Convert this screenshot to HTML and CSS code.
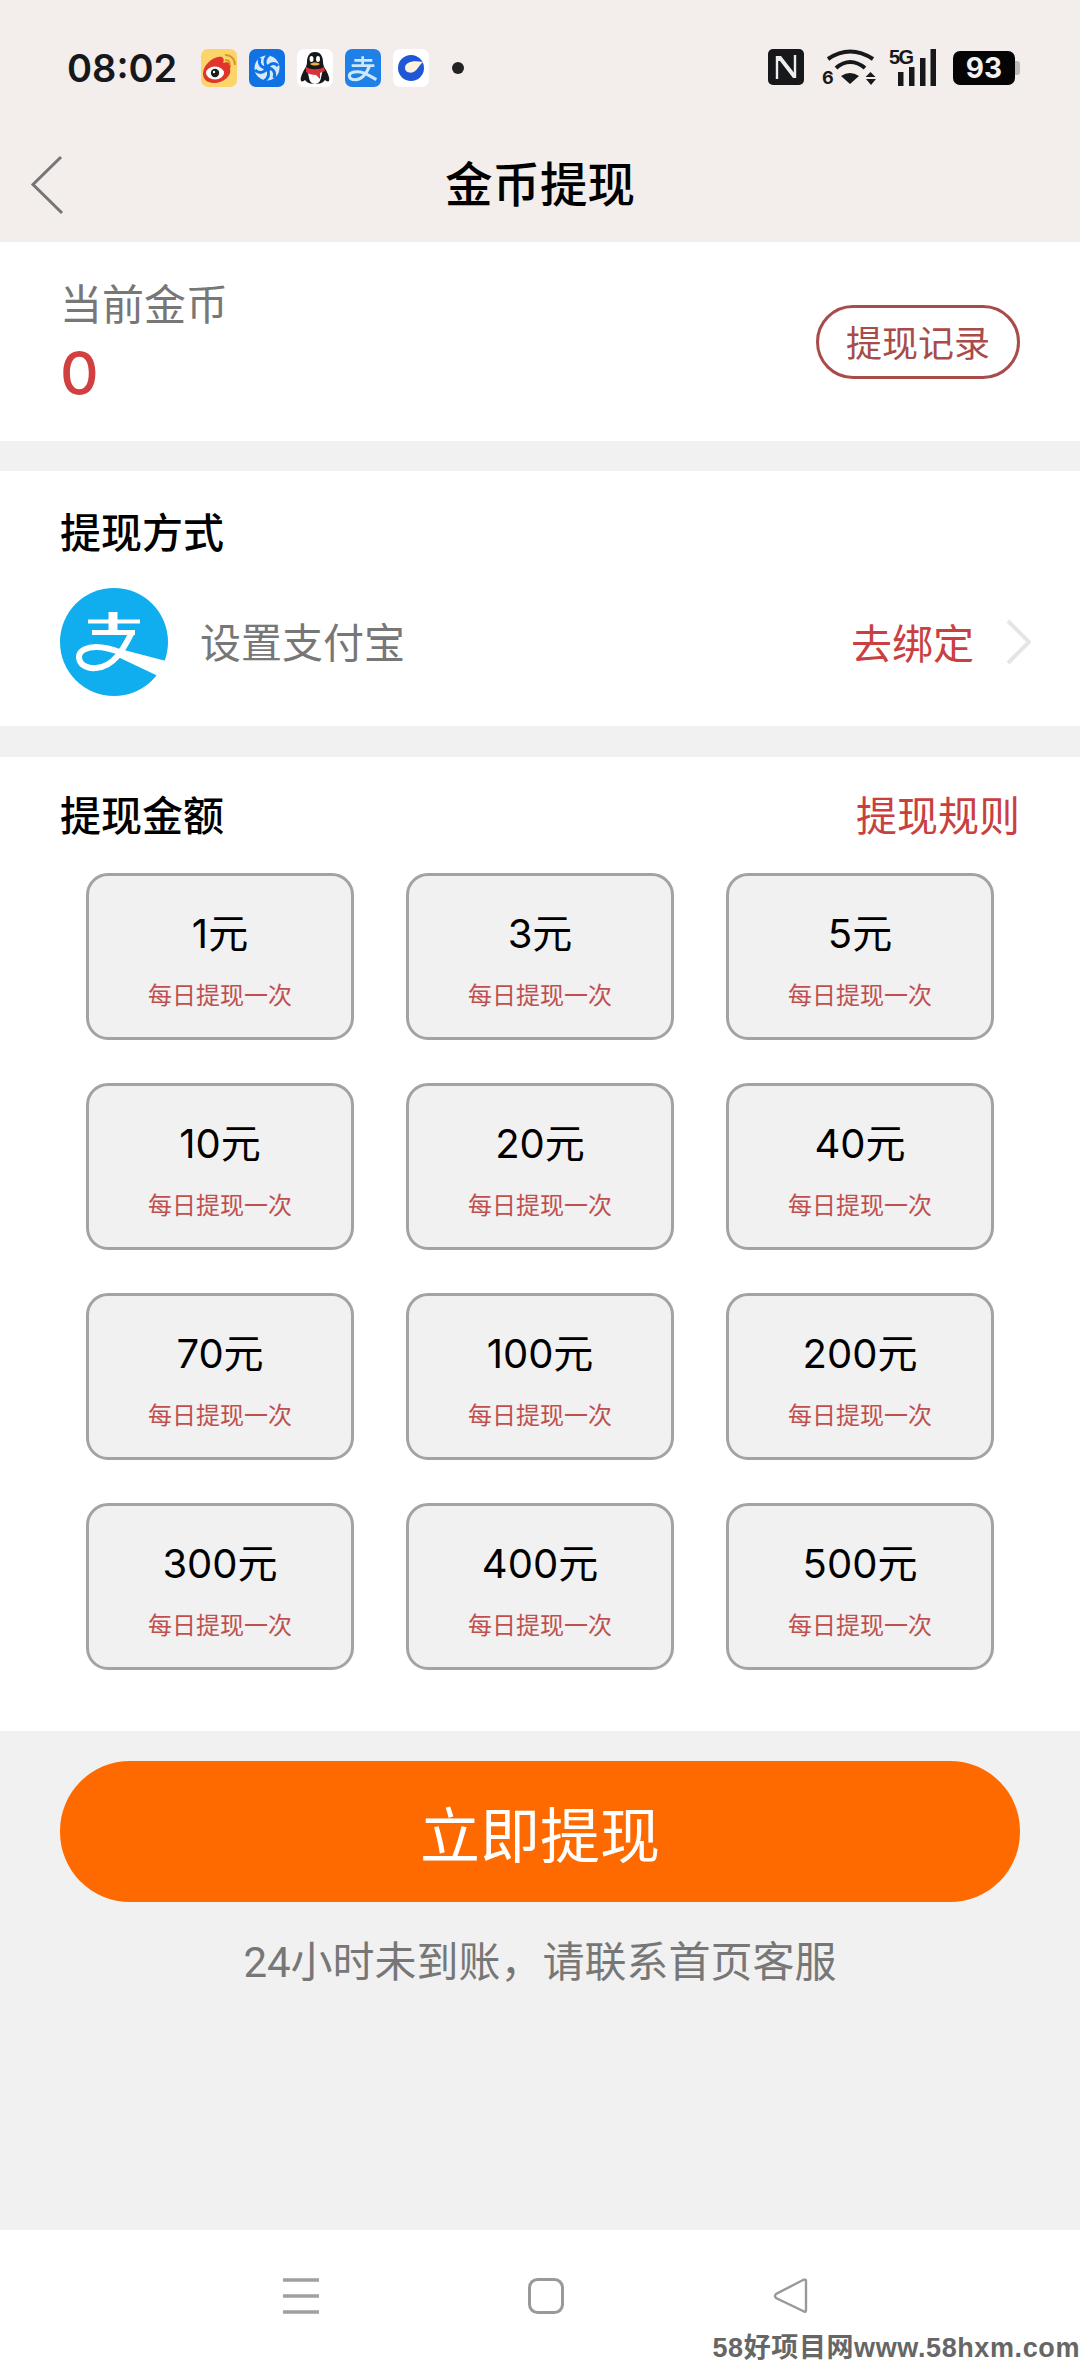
FILE: index.html
```html
<!DOCTYPE html>
<html lang="zh-CN">
<head>
    <meta charset="UTF-8">
    <meta name="viewport" content="width=device-width, initial-scale=1.0">
    <title>金币提现</title>
    <link rel="stylesheet" href="styles.css">
</head>
<body>
    <div class="header">
        <div class="status-bar">
            <div class="status-left">
                <span class="time">08:02</span>
                <div class="notify-icons">
                    <svg class="app-icon" viewBox="0 0 36 38">
                        <rect width="36" height="38" rx="7" fill="#fcd56a"/>
                        <path d="M2 25C2 17 10 9 17 8 22 7 24 10 22 14 27 12 31 15 29 20 31 27 22 34 13 34 6 34 2 30 2 25z" fill="#e0352c"/>
                        <ellipse cx="14" cy="24" rx="9" ry="6.5" fill="#fff"/>
                        <circle cx="14" cy="24" r="4.2" fill="#1c1c1c"/>
                        <circle cx="13" cy="23" r="1.2" fill="#fff"/>
                        <path d="M24 11c3 0 5 2 5 5M24 6c6 0 10 4 10 10" stroke="#d9932f" stroke-width="1.8" fill="none"/>
                    </svg>
                    <svg class="app-icon" viewBox="0 0 36 38">
                        <rect width="36" height="38" rx="7" fill="#1172e4"/>
                        <circle cx="18" cy="19" r="12.5" fill="#d5ebfb"/>
                        <g stroke="#1172e4" stroke-width="3" fill="none">
                            <path d="M18 19C15 14 15 9 20 6"/>
                            <path d="M18 19C21 14 26 13 29 17"/>
                            <path d="M18 19C24 19 27 23 25 29"/>
                            <path d="M18 19C21 24 20 29 15 32"/>
                            <path d="M18 19C15 24 10 25 6 21"/>
                            <path d="M18 19C12 19 9 15 11 9"/>
                        </g>
                        <circle cx="18" cy="19" r="3.5" fill="#1172e4"/>
                    </svg>
                    <svg class="app-icon" viewBox="0 0 36 38">
                        <rect width="36" height="38" rx="7" fill="#fff"/>
                        <path d="M18 3c6 0 8 5 8 10 0 3 1 5 3 8 2 4 4 8 3 11-1 1-3 0-4-1-2 3-6 4-10 4s-8-1-10-4c-1 1-3 2-4 1-1-3 1-7 3-11 2-3 3-5 3-8 0-5 2-10 8-10z" fill="#17181c"/>
                        <path d="M10 21c3 8 1 13 8 14 7-1 5-6 8-14z" fill="#fff"/>
                        <path d="M9 18c5 3 13 3 18 0l1 4-5 2 0 6-4-4c-4 0-8-1-10-3z" fill="#d8333a"/>
                        <ellipse cx="14.5" cy="10" rx="2" ry="3" fill="#fff"/>
                        <ellipse cx="21" cy="10" rx="2" ry="3" fill="#fff"/>
                        <path d="M13 15c3-2 7-2 10 0-3 2-7 2-10 0z" fill="#f0b13c"/>
                    </svg>
                    <svg class="app-icon" viewBox="0 0 108 114">
                        <rect width="108" height="114" rx="21" fill="#1f80e8"/>
                        <g stroke="#cfe8fb" fill="none">
                            <path d="M28 34H82M20 50H88M53 22V50" stroke-width="8"/>
                            <path d="M74 50C66 70 52 92 32 92 20 92 13 87 13 80 13 72 24 68 38 68 58 68 72 80 94 92" stroke-width="9"/>
                        </g>
                    </svg>
                    <svg class="app-icon" viewBox="0 0 36 38">
                        <rect width="36" height="38" rx="7" fill="#fff"/>
                        <circle cx="18" cy="19" r="13" fill="#2057d6"/>
                        <path d="M12 19C12 13 20 11 30 13 26 16 25 20 22 22 19 25 12 24 12 19z" fill="#fdf3dc"/>
                    </svg>
                    <span class="notify-dot"></span>
                </div>
            </div>
            <div class="status-right">
                <svg class="nfc-icon" viewBox="0 0 36 36">
                    <rect width="36" height="36" rx="5" fill="#17181c"/>
                    <path d="M9 7V30M27 6V29" stroke="#eee" stroke-width="2.4" fill="none"/>
                    <path d="M10 7H13L27 25V29H25L12 12H10z" fill="#eee"/>
                </svg>
                <svg class="wifi-icon" viewBox="0 0 58 38">
                    <g stroke="#17181c" stroke-width="4" fill="none">
                        <path d="M7 10Q29 -5 52 10"/>
                        <path d="M15 19Q29 7 44 19"/>
                    </g>
                    <path d="M20 27Q29 21 38 27L29 35z" fill="#17181c"/>
                    <text class="wifi-six" x="1" y="35">6</text>
                    <path d="M49.5 23l5 5h-10zM45 30h10l-5 6z" fill="#17181c"/>
                </svg>
                <svg class="signal-icon" viewBox="0 -6 47 43">
                    <text class="signal-label" x="0" y="15">5G</text>
                    <g fill="#17181c">
                        <rect x="9" y="23" width="5.5" height="14"/>
                        <rect x="20" y="18" width="5.5" height="19"/>
                        <rect x="31" y="9" width="5.5" height="28"/>
                        <rect x="41.5" y="0" width="5.5" height="37"/>
                    </g>
                </svg>
                <div class="battery">
                    <span class="battery-body">93</span>
                    <span class="battery-nub"></span>
                </div>
            </div>
        </div>
        <div class="nav-bar">
            <svg class="back-icon" viewBox="0 0 34 60">
                <path d="M31 2L3 29.5 32 58" stroke="#757575" stroke-width="3" fill="none"/>
            </svg>
            <h1>金币提现</h1>
        </div>
    </div>

    <div class="card balance-card">
        <div>
            <div class="balance-label">当前金币</div>
            <div class="balance-value">0</div>
        </div>
        <button class="record-btn">提现记录</button>
    </div>

    <div class="card method-card">
        <h2 class="section-title">提现方式</h2>
        <div class="method-row">
            <svg class="alipay-logo" viewBox="0 0 108 108">
                <circle cx="54" cy="54" r="54" fill="#10aeef"/>
                <g stroke="#fff" fill="none">
                    <path d="M28 33.5H80" stroke-width="4"/>
                    <path d="M32 44.5H75" stroke-width="5"/>
                    <path d="M53 24V44" stroke-width="9"/>
                    <path d="M71 46C64 60 54 79 36 80 26 81 19 76 19 69 19 62 28 59 36 59 44 59 52 61 62 65" stroke-width="6"/>
                </g>
                <path d="M60 61L106 73 98 88 58 69z" fill="#fff"/>
            </svg>
            <span class="method-name">设置支付宝</span>
            <span class="method-action">去绑定</span>
            <svg class="chevron" viewBox="0 0 26 46">
                <path d="M3 2L24 23 3 44" stroke="#e5e5e5" stroke-width="4" fill="none"/>
            </svg>
        </div>
    </div>

    <div class="card amount-card">
        <div class="amount-head">
            <h2 class="section-title">提现金额</h2>
            <span class="rule-link">提现规则</span>
        </div>
        <div class="amount-grid">
            <div class="amount-item"><div class="amount-value">1元</div><div class="amount-note">每日提现一次</div></div>
            <div class="amount-item"><div class="amount-value">3元</div><div class="amount-note">每日提现一次</div></div>
            <div class="amount-item"><div class="amount-value">5元</div><div class="amount-note">每日提现一次</div></div>
            <div class="amount-item"><div class="amount-value">10元</div><div class="amount-note">每日提现一次</div></div>
            <div class="amount-item"><div class="amount-value">20元</div><div class="amount-note">每日提现一次</div></div>
            <div class="amount-item"><div class="amount-value">40元</div><div class="amount-note">每日提现一次</div></div>
            <div class="amount-item"><div class="amount-value">70元</div><div class="amount-note">每日提现一次</div></div>
            <div class="amount-item"><div class="amount-value">100元</div><div class="amount-note">每日提现一次</div></div>
            <div class="amount-item"><div class="amount-value">200元</div><div class="amount-note">每日提现一次</div></div>
            <div class="amount-item"><div class="amount-value">300元</div><div class="amount-note">每日提现一次</div></div>
            <div class="amount-item"><div class="amount-value">400元</div><div class="amount-note">每日提现一次</div></div>
            <div class="amount-item"><div class="amount-value">500元</div><div class="amount-note">每日提现一次</div></div>
        </div>
    </div>

    <div class="footer-area">
        <button class="withdraw-btn">立即提现</button>
        <p class="tip">24小时未到账，请联系首页客服</p>
    </div>

    <div class="system-nav">
        <svg class="sys-icon" viewBox="0 0 36 36">
            <path d="M0 2H36M0 18H36M0 34H36" stroke="#a0a0a0" stroke-width="3.5"/>
        </svg>
        <svg class="sys-icon" viewBox="0 0 36 36">
            <rect x="1.5" y="1.5" width="33" height="33" rx="8" fill="none" stroke="#999" stroke-width="3"/>
        </svg>
        <svg class="sys-icon" viewBox="0 0 36 36">
            <path d="M33 3V32Q33 35 30 33L3 20Q1 18 3 16L30 2Q33 1 33 3z" fill="none" stroke="#999" stroke-width="2.4"/>
        </svg>
    </div>

    <div class="watermark">58好项目网www.58hxm.com</div>
</body>
</html>
```

FILE: styles.css
```css
* {
    box-sizing: border-box;
}
body {
    font-family: Roboto, "Noto Sans CJK SC", sans-serif;
    margin: 0;
    height: 2362px;
    display: flex;
    flex-direction: column;
    background-color: #f1f1f1;
    color: #000;
    overflow: hidden;
}
h1, h2, p {
    margin: 0;
    font-weight: 500;
}
button {
    font-family: inherit;
    padding: 0;
}

/* header */
.header {
    background-color: #f3eeec;
    height: 242px;
}
.status-bar {
    height: 127px;
    padding: 49px 60px 0 67px;
    display: flex;
    justify-content: space-between;
    align-items: flex-start;
}
.status-left {
    display: flex;
    align-items: center;
    height: 38px;
}
.time {
    font-family: Inter, sans-serif;
    font-size: 38px;
    font-weight: 600;
    color: #17181c;
    width: 134px;
}
.notify-icons {
    display: flex;
    align-items: center;
    gap: 12px;
}
.app-icon {
    width: 36px;
    height: 38px;
    display: block;
}
.notify-dot {
    width: 12px;
    height: 12px;
    margin-left: 11px;
    border-radius: 50%;
    background-color: #222;
}
.status-right {
    display: flex;
    align-items: flex-start;
}
.nfc-icon {
    width: 36px;
    height: 36px;
    margin-right: 17px;
}
.wifi-icon {
    width: 58px;
    height: 38px;
    margin-right: 10px;
}
.wifi-six {
    font-family: Inter, sans-serif;
    font-size: 18px;
    font-weight: 700;
    fill: #17181c;
}
.signal-icon {
    width: 47px;
    height: 43px;
    margin: -6px 17px 0 0;
}
.signal-label {
    font-family: "Liberation Sans", sans-serif;
    font-size: 20px;
    font-weight: 700;
    letter-spacing: -1.5px;
    fill: #17181c;
}
.battery {
    display: flex;
    align-items: center;
    margin-top: 2px;
}
.battery-body {
    width: 62px;
    height: 34px;
    border-radius: 7px;
    background-color: #050505;
    color: #f2f2f2;
    font-family: Inter, sans-serif;
    font-size: 28px;
    font-weight: 700;
    line-height: 34px;
    text-align: center;
}
.battery-nub {
    width: 5px;
    height: 14px;
    border-radius: 0 3px 3px 0;
    background-color: #bdbbb9;
}
.nav-bar {
    height: 115px;
    padding-left: 30px;
    display: flex;
    align-items: center;
}
.back-icon {
    width: 34px;
    height: 60px;
}
.nav-bar h1 {
    flex: 1;
    margin: 0 0 6px -64px;
    text-align: center;
    font-size: 47.5px;
    font-weight: 500;
}

/* cards */
.card {
    background-color: #fff;
}
.balance-card {
    height: 199px;
    padding: 34px 60px 0;
    margin-bottom: 30px;
    display: flex;
    justify-content: space-between;
    align-items: flex-start;
}
.balance-label {
    font-size: 42px;
    line-height: 60px;
    color: #777;
}
.balance-value {
    font-family: Inter, sans-serif;
    font-size: 60px;
    line-height: 74px;
    font-weight: 500;
    color: #d23f40;
}
.record-btn {
    width: 204px;
    height: 74px;
    margin-top: 29px;
    padding-bottom: 2px;
    border: 3px solid #a84b49;
    border-radius: 37px;
    background-color: #fff;
    color: #a84b49;
    font-size: 36px;
}
.section-title {
    font-size: 41px;
    line-height: 60px;
}
.method-card {
    height: 255px;
    padding: 33px 60px 0;
    margin-bottom: 31px;
}
.method-row {
    margin-top: 24px;
    height: 108px;
    display: flex;
    align-items: center;
}
.alipay-logo {
    width: 108px;
    height: 108px;
}
.method-name {
    flex: 1;
    margin-left: 32px;
    padding-bottom: 4px;
    font-size: 41px;
    color: #777;
}
.method-action {
    padding-bottom: 3px;
    font-size: 41px;
    color: #c94040;
}
.chevron {
    width: 26px;
    height: 46px;
    margin: 0 -11px 0 31px;
}
.amount-card {
    height: 974px;
    padding-top: 30px;
}
.amount-head {
    padding: 0 60px;
    display: flex;
    justify-content: space-between;
    align-items: center;
}
.rule-link {
    font-size: 41px;
    line-height: 60px;
    color: #c94040;
}
.amount-grid {
    margin-top: 26px;
    padding: 0 86px;
    display: grid;
    grid-template-columns: repeat(3, 268px);
    grid-auto-rows: 167px;
    column-gap: 52px;
    row-gap: 43px;
}
.amount-item {
    border: 3px solid #a3a3a3;
    border-radius: 22px;
    background-color: #f1f1f1;
    text-align: center;
    padding-top: 30px;
}
.amount-value {
    font-family: Inter, "Noto Sans CJK SC", sans-serif;
    font-size: 40px;
    line-height: 56px;
}
.amount-note {
    margin-top: 14px;
    font-size: 24px;
    line-height: 40px;
    color: #c0504e;
}

/* footer */
.footer-area {
    flex: 1;
    padding: 30px 60px 0;
}
.withdraw-btn {
    width: 960px;
    height: 141px;
    border: none;
    border-radius: 70px;
    background-color: #ff6a00;
    color: #fff;
    font-size: 60px;
}
.tip {
    margin-top: 31px;
    text-align: center;
    font-size: 42px;
    font-weight: 400;
    line-height: 60px;
    color: #777;
}
.system-nav {
    height: 132px;
    padding: 48px 0 0 283px;
    background-color: #fff;
    display: flex;
    align-items: flex-start;
    gap: 209px;
}
.sys-icon {
    width: 36px;
    height: 36px;
}
.watermark {
    position: absolute;
    right: 0;
    top: 2334px;
    font-family: "Liberation Sans", "Noto Sans CJK SC", sans-serif;
    font-size: 27px;
    line-height: 28px;
    letter-spacing: 0.6px;
    font-weight: 700;
    color: #666;
    white-space: nowrap;
}
```
